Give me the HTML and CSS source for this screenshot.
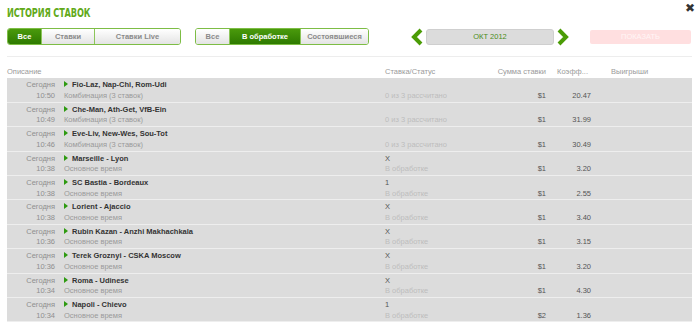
FILE: index.html
```html
<!DOCTYPE html>
<html lang="ru">

<head>
	<meta charset="UTF-8">
	<title>История ставок</title>
	<link rel="stylesheet" href="styles.css">
</head>

<body>
	<div class="panel">
		<div class="head">
			<h1>История ставок</h1>
			<span class="close">&#10006;</span>
		</div>

		<div class="toolbar">
			<div class="tabs">
				<span class="tab -on w33">Все</span>
				<span class="tab w52">Ставки</span>
				<span class="tab w85">Ставки Live</span>
			</div>
			<div class="tabs">
				<span class="tab w33">Все</span>
				<span class="tab -on w70">В обработке</span>
				<span class="tab w67">Состоявшиеся</span>
			</div>
			<div class="month">
				<svg class="arrow" width="13" height="18" viewBox="0 0 13 18"><polyline points="10,2 3,9 10,16" fill="none" stroke="#4b9c06" stroke-width="4" stroke-linejoin="miter"/></svg>
				<span class="month-name">ОКТ 2012</span>
				<svg class="arrow" width="13" height="18" viewBox="0 0 13 18"><polyline points="3,2 10,9 3,16" fill="none" stroke="#4b9c06" stroke-width="4" stroke-linejoin="miter"/></svg>
			</div>
			<span class="show">ПОКАЗАТЬ</span>
		</div>

		<table class="bets">
			<colgroup>
				<col class="c-date">
				<col class="c-desc">
				<col class="c-status">
				<col class="c-sum">
				<col class="c-odds">
				<col class="c-win">
			</colgroup>
			<thead>
				<tr>
					<th colspan="2">Описание</th>
					<th>Ставка/Статус</th>
					<th class="num">Сумма ставки</th>
					<th class="odds">Коэфф...</th>
					<th>Выигрыши</th>
				</tr>
			</thead>
			<tbody>
				<tr>
					<td class="date">Сегодня<br>10:50</td>
					<td><b>Fio-Laz, Nap-Chi, Rom-Udi</b><br><span class="sub">Комбинация (3 ставок)</span></td>
					<td><br><span class="muted">0 из 3 рассчитано</span></td>
					<td class="num"><br>$1</td>
					<td class="odds"><br>20.47</td>
					<td></td>
				</tr>
				<tr>
					<td class="date">Сегодня<br>10:49</td>
					<td><b>Che-Man, Ath-Get, VfB-Ein</b><br><span class="sub">Комбинация (3 ставок)</span></td>
					<td><br><span class="muted">0 из 3 рассчитано</span></td>
					<td class="num"><br>$1</td>
					<td class="odds"><br>31.99</td>
					<td></td>
				</tr>
				<tr>
					<td class="date">Сегодня<br>10:46</td>
					<td><b>Eve-Liv, New-Wes, Sou-Tot</b><br><span class="sub">Комбинация (3 ставок)</span></td>
					<td><br><span class="muted">0 из 3 рассчитано</span></td>
					<td class="num"><br>$1</td>
					<td class="odds"><br>30.49</td>
					<td></td>
				</tr>
				<tr>
					<td class="date">Сегодня<br>10:38</td>
					<td><b>Marseille - Lyon</b><br><span class="sub">Основное время</span></td>
					<td>X<br><span class="muted">В обработке</span></td>
					<td class="num"><br>$1</td>
					<td class="odds"><br>3.20</td>
					<td></td>
				</tr>
				<tr>
					<td class="date">Сегодня<br>10:38</td>
					<td><b>SC Bastia - Bordeaux</b><br><span class="sub">Основное время</span></td>
					<td>1<br><span class="muted">В обработке</span></td>
					<td class="num"><br>$1</td>
					<td class="odds"><br>2.55</td>
					<td></td>
				</tr>
				<tr>
					<td class="date">Сегодня<br>10:38</td>
					<td><b>Lorient - Ajaccio</b><br><span class="sub">Основное время</span></td>
					<td>X<br><span class="muted">В обработке</span></td>
					<td class="num"><br>$1</td>
					<td class="odds"><br>3.40</td>
					<td></td>
				</tr>
				<tr>
					<td class="date">Сегодня<br>10:36</td>
					<td><b>Rubin Kazan - Anzhi Makhachkala</b><br><span class="sub">Основное время</span></td>
					<td>X<br><span class="muted">В обработке</span></td>
					<td class="num"><br>$1</td>
					<td class="odds"><br>3.15</td>
					<td></td>
				</tr>
				<tr>
					<td class="date">Сегодня<br>10:36</td>
					<td><b>Terek Groznyi - CSKA Moscow</b><br><span class="sub">Основное время</span></td>
					<td>X<br><span class="muted">В обработке</span></td>
					<td class="num"><br>$1</td>
					<td class="odds"><br>3.20</td>
					<td></td>
				</tr>
				<tr>
					<td class="date">Сегодня<br>10:34</td>
					<td><b>Roma - Udinese</b><br><span class="sub">Основное время</span></td>
					<td>X<br><span class="muted">В обработке</span></td>
					<td class="num"><br>$1</td>
					<td class="odds"><br>4.30</td>
					<td></td>
				</tr>
				<tr>
					<td class="date">Сегодня<br>10:34</td>
					<td><b>Napoli - Chievo</b><br><span class="sub">Основное время</span></td>
					<td>1<br><span class="muted">В обработке</span></td>
					<td class="num"><br>$2</td>
					<td class="odds"><br>1.36</td>
					<td></td>
				</tr>
			</tbody>
		</table>
	</div>
</body>

</html>
```

FILE: styles.css
```css
body {
	margin: 0;
	background: #fff;
	font-family: "Liberation Sans", Arial, sans-serif;
	font-size: 7.5px;
	color: #555;
}

.panel {
	padding: 4px 8px 0 7px;
}

.head {
	display: flex;
	justify-content: space-between;
	align-items: flex-start;
	height: 24px;
}

h1 {
	display: inline-block;
	margin: 2px 0 0;
	font-family: "DejaVu Sans Condensed", sans-serif;
	font-size: 12px;
	font-weight: bold;
	text-transform: uppercase;
	letter-spacing: -0.2px;
	color: #62aa1a;
	transform: scaleX(0.76);
	transform-origin: left center;
}

.close {
	margin: -3px -3px 0 0;
	font-size: 12px;
	color: #333;
}

.toolbar {
	display: flex;
	align-items: center;
	height: 17px;
	margin-bottom: 11px;
}

.tabs {
	display: flex;
	height: 15px;
	margin-right: 14px;
	border: 1px solid #7dbd45;
	border-radius: 3px;
	overflow: hidden;
}

.tab {
	display: flex;
	align-items: center;
	justify-content: center;
	font-weight: bold;
	color: #8a8a8a;
	background: linear-gradient(#fff, #e4e4e4);
	border-left: 1px solid #8cc55a;
}

.tab:first-child {
	border-left: 0;
}

.tab.-on {
	color: #fff;
	background: linear-gradient(#4a9a0c, #2e7a00);
}

.w33 { width: 33px; }
.w52 { width: 52px; }
.w67 { width: 67px; }
.w70 { width: 70px; }
.w85 { width: 85px; }

.month {
	display: flex;
	align-items: center;
	gap: 2px;
	margin-left: 28px;
}

.month-name {
	width: 126px;
	height: 14px;
	line-height: 14px;
	text-align: center;
	color: #4b8c1a;
	background: #dcdcdc;
	border: 1px solid #cfcfcf;
	border-radius: 3px;
}

.show {
	width: 101px;
	height: 14px;
	line-height: 14px;
	margin-left: 21px;
	text-align: center;
	color: #fff6f6;
	background: #ffdfe0;
	border-radius: 2px;
}

.bets {
	width: 685px;
	table-layout: fixed;
	border-collapse: collapse;
	border-top: 1px solid #ededed;
}

.c-date { width: 53px; }
.c-desc { width: 325px; }
.c-status { width: 110px; }
.c-sum { width: 51px; }
.c-odds { width: 65px; }
.c-win { width: 81px; }

th {
	height: 11px;
	padding: 10px 0 0;
	line-height: 10px;
	font-weight: normal;
	text-align: left;
	white-space: nowrap;
	color: #9a9a9a;
	vertical-align: top;
}

th.odds {
	padding-left: 11px;
}

tbody tr {
	height: 24.4px;
}

td {
	padding: 2px 0 0;
	line-height: 10.5px;
	vertical-align: top;
	white-space: nowrap;
	background: #dcdcdc;
	border-bottom: 1px solid #eeeeee;
}

td.date {
	padding-right: 5px;
	text-align: right;
	color: #8f8f8f;
}

td b {
	position: relative;
	padding-left: 12px;
	margin-left: -4px;
	color: #333;
}

td b::before {
	content: "";
	position: absolute;
	left: 4px;
	top: 1px;
	border-left: 4px solid #2e9a10;
	border-top: 3px solid transparent;
	border-bottom: 3px solid transparent;
}

td:nth-child(2) {
	padding-left: 4px;
}

.sub {
	color: #9a9a9a;
}

.muted {
	color: #bdbdbd;
}

.num {
	text-align: right;
}

td.odds {
	padding-right: 20px;
	text-align: right;
}
```
